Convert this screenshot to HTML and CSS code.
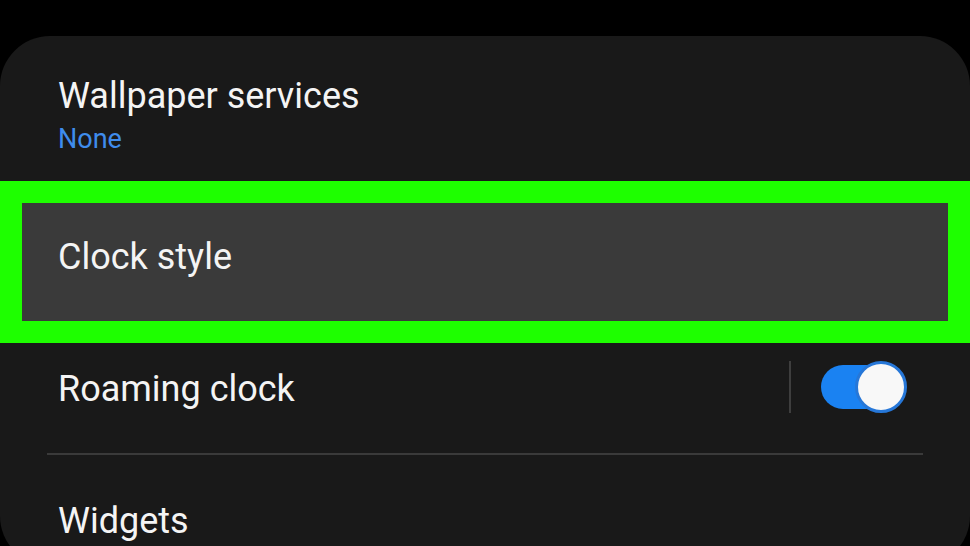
FILE: index.html
```html
<!DOCTYPE html>
<html lang="en">
<head>
<meta charset="utf-8">
<title>Settings</title>
<link rel="stylesheet" href="styles.css">
</head>
<body>
<main class="card">
  <div class="item item-two-line">
    <div class="title">Wallpaper services</div>
    <div class="subtitle">None</div>
  </div>
  <div class="highlight">
    <div class="title">Clock style</div>
  </div>
  <div class="item item-switch">
    <div class="title label">Roaming clock</div>
    <div class="vsep"></div>
    <div class="toggle">
      <div class="track"></div>
      <div class="thumb"></div>
    </div>
  </div>
  <div class="divider"></div>
  <div class="item item-last">
    <div class="title">Widgets</div>
  </div>
</main>
</body>
</html>
```

FILE: styles.css
```css
html, body {
  margin: 0;
  padding: 0;
}
body {
  background: #000;
  width: 970px;
  height: 546px;
  overflow: hidden;
  font-family: Roboto, "Noto Sans", "Liberation Sans", sans-serif;
  color: #f4f4f4;
}
.card {
  margin-top: 36px;
  height: 530px;
  background: #191919;
  border-radius: 50px;
  display: flex;
  flex-direction: column;
}
.title {
  font-size: 36px;
  line-height: 42px;
  white-space: nowrap;
}
.item-two-line {
  box-sizing: border-box;
  height: 145px;
  padding: 39px 0 0 58px;
}
.subtitle {
  font-size: 27px;
  line-height: 30px;
  margin-top: 7px;
  color: #3f8cec;
}
.highlight {
  box-sizing: border-box;
  height: 162px;
  border: 22px solid #1eff00;
  background: #3a3a3a;
  display: flex;
  align-items: center;
  padding: 0 0 10px 36px;
}
.item-switch {
  height: 88px;
  display: flex;
  align-items: center;
  padding: 0 63px 0 58px;
}
.label {
  flex: 1;
  padding-top: 4px;
}
.vsep {
  width: 2px;
  height: 52px;
  background: #3e3e3e;
  margin-right: 30px;
}
.toggle {
  position: relative;
  width: 86px;
  height: 52px;
  display: flex;
  align-items: center;
}
.track {
  width: 80px;
  height: 44px;
  border-radius: 22px;
  background: #1a82f2;
}
.thumb {
  position: absolute;
  right: 0;
  top: 0;
  width: 52px;
  height: 52px;
  box-sizing: border-box;
  border-radius: 50%;
  background: #f8f8f8;
  border: 3px solid #2677d8;
}
.divider {
  height: 2px;
  margin: 22px 47px 0 47px;
  background: #3a3a3a;
}
.item-last {
  padding: 45px 0 0 58px;
}
```
